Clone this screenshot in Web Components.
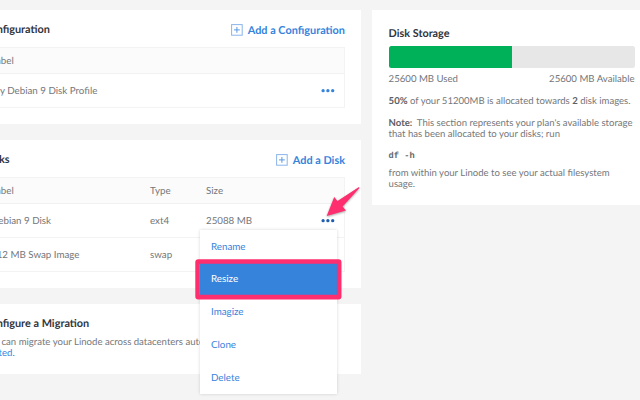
<!DOCTYPE html>
<html lang="en">
<head>
<meta charset="utf-8">
<title>Linode disks</title>
<style>
html,body{margin:0;height:400px;overflow:hidden;background:#f4f4f4}
body{font:9.75px/11px Lato,"Open Sans",sans-serif;color:#74777b;text-rendering:geometricPrecision}
</style>
</head>
<body>
<disk-page></disk-page>
<script>
const define = (name, html) => customElements.define(name, class extends HTMLElement {
  constructor() {
    super();
    this.attachShadow({ mode: 'open' }).innerHTML = html;
  }
});

define('ui-card', `<style>
:host{display:block;background:#fff;box-sizing:border-box;padding:12px 16.3px 16px}
header{display:flex;justify-content:space-between;height:25px}
::slotted([slot=title]){font-size:10.9px;line-height:15px;font-weight:700;color:#32363c}
</style><header><slot name="title"></slot><slot name="action"></slot></header><slot></slot>`);

define('add-link', `<style>
:host{display:flex;gap:4.5px;align-items:center;height:16px;font-size:10.9px;font-weight:700;color:#3683dc}
svg{display:block}
</style><svg width="12" height="12" viewBox="0 0 12 12" fill="none"><rect x=".6" y=".6" width="10.6" height="10.6" stroke="#8ab6ea"/><path d="M5.9 3v5.8M3 5.9h5.8" stroke="#5b99e2"/></svg><span><slot></slot></span>`);

define('row-actions', `<style>
:host{display:block;color:#3683dc;padding-left:.7px}svg{display:block}
</style><svg width="14" height="4" viewBox="0 0 14 4" fill="currentColor"><circle cx="2.1" cy="1.7" r="1.65"/><circle cx="6.9" cy="1.7" r="1.65"/><circle cx="11.7" cy="1.7" r="1.65"/></svg>`);

define('table-row', `<style>
:host{display:grid;grid-template-columns:var(--cols,159px 56px 1fr 24px);align-items:center;box-sizing:border-box;height:34px;padding-left:6.7px;border:1px solid #f3f3f3;border-top:0}
:host([head]){height:27px;background:#fbfbfb;border-top:1px solid #f3f3f3;border-bottom:1px solid #f1f1f1}
::slotted(span){padding-top:2px}
</style><slot></slot>`);

define('action-item', `<style>
:host{display:flex;align-items:center;box-sizing:border-box;height:32.8px;padding:2px 0 0 11.3px;color:#3683dc;font-size:9.8px}
:host([selected]){background:#3683dc;color:#fff}
</style><span><slot></slot></span>`);

define('action-menu', `<style>
:host{display:block;position:absolute;left:199.7px;top:229.7px;width:137.3px;background:#fff;box-shadow:0 0 3px rgba(0,0,0,.16)}
</style><slot></slot>`);

define('callout-mark', `<style>
:host{display:block;position:absolute;left:0;top:0;width:640px;height:400px;pointer-events:none}
svg{display:block}
path{filter:drop-shadow(0 1px 1px rgba(0,0,0,.35))}
</style><svg width="640" height="400"><rect x="197.6" y="261.5" width="141.6" height="35.6" rx=".6" fill="none" stroke="#ff2e6e" stroke-width="4.6"/><path d="M326.7 216 L334.2 196.9 L337.5 201 L358.6 187.2 Q359.8 187 359.3 188.3 L342.6 206.6 L346 210.4 Z" fill="#ff2e6e"/></svg>`);

define('storage-panel', `<style>
:host{display:block;background:#fff;box-sizing:border-box;height:195px;padding:17px 16.8px 0 16.3px;font-size:9.56px}
h2,p,pre{margin:0}
h2{font-size:10.85px;line-height:13px;color:#32363c}
.bar{height:22px;margin-top:5.7px;border-radius:2.5px;background:#e7e7e7;overflow:hidden}
.bar i{display:block;width:50%;height:100%;background:#00b159}
.legend{display:flex;justify-content:space-between;margin-top:6.3px;font-size:9.62px}
p{white-space:nowrap}
.alloc,.note{margin-top:11px}
b{color:#5d6064}
pre{font:700 8.7px/11px "Liberation Mono",monospace;color:#666;margin-top:11px}
.tail{margin-top:6px}
</style><h2>Disk Storage</h2><div class="bar"><i></i></div>
<div class="legend"><span>25600 MB Used</span><span>25600 MB Available</span></div>
<p class="alloc"><b>50%</b> of your 51200MB is allocated towards <b>2</b> disk images.</p>
<p class="note"><b>Note:</b>&nbsp; This section represents your plan's available storage<br>that has been allocated to your disks; run</p>
<pre>df -h</pre>
<p class="tail">from within your Linode to see your actual filesystem<br>usage.</p>`);

define('disk-page', `<style>
:host{display:grid;grid-template-columns:394.3px 279px;column-gap:11px;margin-left:-33px;padding-top:10px;align-items:start}
.left{display:grid;grid-template-rows:114px 148px 70px;row-gap:16px}
.migrate p{margin:-4.5px 0 0;white-space:nowrap;font-size:9.6px}
.migrate a{color:#3683dc;margin-left:-.6px}
.one{--cols:1fr 24px}
.active{color:#1f5fae}
</style>
<div class="left">
<ui-card><span slot="title">Configuration</span><add-link slot="action">Add a Configuration</add-link>
<table-row class="one" head><span>Label</span></table-row>
<table-row class="one"><span>My Debian 9 Disk Profile</span><row-actions></row-actions></table-row></ui-card>
<ui-card><span slot="title">Disks</span><add-link slot="action">Add a Disk</add-link>
<table-row head><span>Label</span><span>Type</span><span>Size</span></table-row>
<table-row><span>Debian 9 Disk</span><span>ext4</span><span>25088 MB</span><row-actions class="active"></row-actions></table-row>
<table-row><span>512 MB Swap Image</span><span>swap</span></table-row></ui-card>
<ui-card class="migrate"><span slot="title">Configure a Migration</span><p>You can migrate your Linode across datacenters auto<br><a>started.</a></p></ui-card>
</div>
<storage-panel></storage-panel>
<action-menu><action-item>Rename</action-item><action-item selected>Resize</action-item><action-item>Imagize</action-item><action-item>Clone</action-item><action-item>Delete</action-item></action-menu>
<callout-mark></callout-mark>`);
</script>
</body>
</html>
